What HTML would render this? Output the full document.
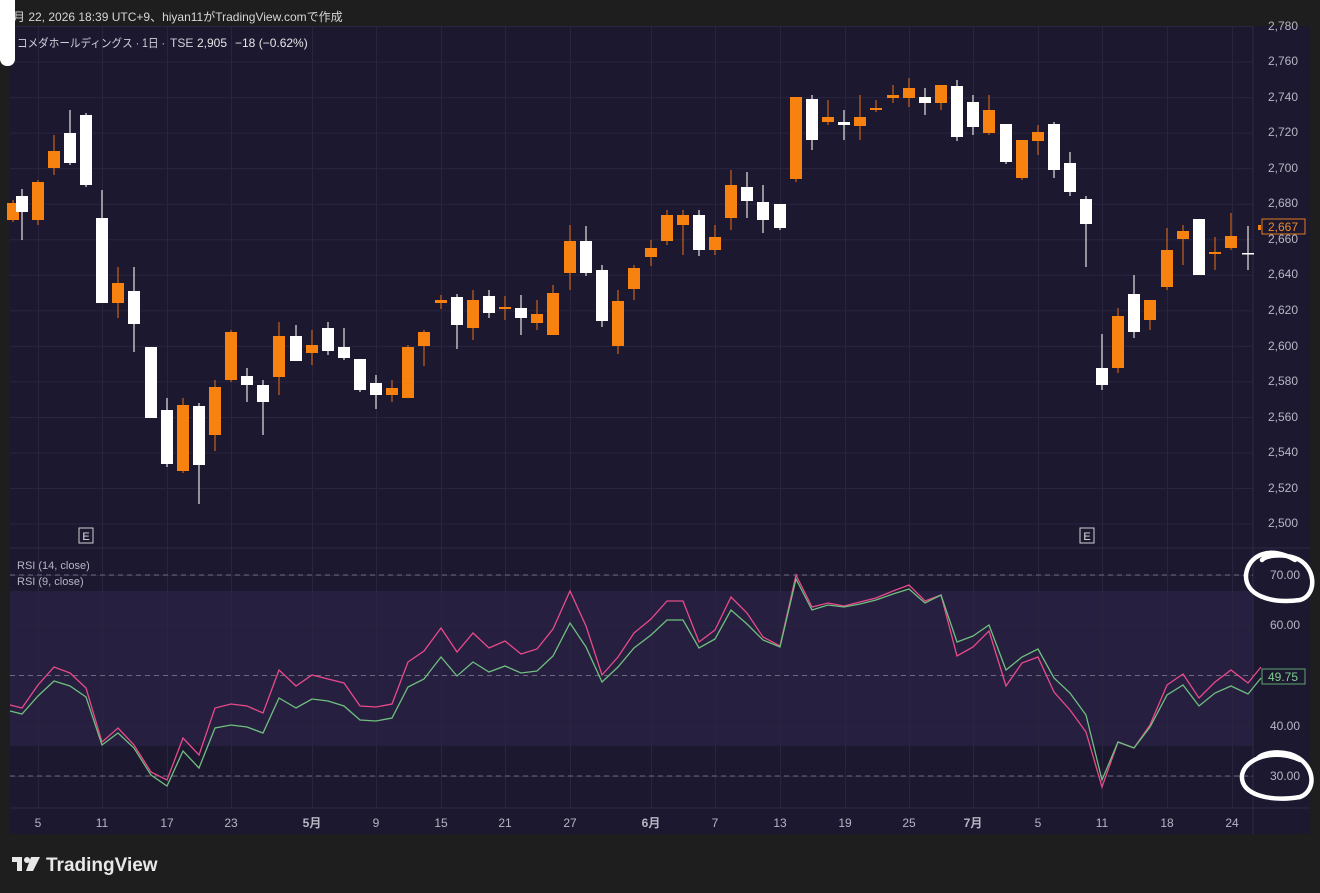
<!DOCTYPE html>
<html><head><meta charset="utf-8"><style>
html,body{margin:0;padding:0;background:#1e1e1e;width:1320px;height:893px;overflow:hidden}
svg{display:block}
text{font-family:"Liberation Sans","Noto Sans CJK JP",sans-serif}
</style></head><body>
<svg id="s" width="1320" height="893" xmlns="http://www.w3.org/2000/svg">
<rect width="1320" height="893" fill="#1e1e1e"/>
<rect x="10" y="26" width="1300" height="808" fill="#1c1830"/>
<rect x="10" y="591" width="1243" height="155" fill="#261f40"/>
<g id="grid" stroke="#29253f" stroke-width="1"></g>
<line x1="10" y1="548" x2="1310" y2="548" stroke="#2e2a44"/>
<line x1="10" y1="808" x2="1310" y2="808" stroke="#2e2a44"/>
<line x1="10" y1="575" x2="1253" y2="575" stroke="#6d6880" stroke-dasharray="5,4"/>
<line x1="10" y1="675.5" x2="1253" y2="675.5" stroke="#6d6880" stroke-dasharray="5,4"/>
<line x1="10" y1="776" x2="1253" y2="776" stroke="#6d6880" stroke-dasharray="5,4"/>
<g id="c"></g>
<polyline id="pk" fill="none" stroke="#e84a8a" stroke-width="1.3"/>
<polyline id="gr" fill="none" stroke="#6fbf7e" stroke-width="1.3"/>
<g fill="#b8b5c4" font-size="12" text-anchor="middle">
<text x="1283" y="30">2,780</text><text x="1283" y="65">2,760</text><text x="1283" y="101">2,740</text><text x="1283" y="136">2,720</text><text x="1283" y="172">2,700</text><text x="1283" y="207">2,680</text><text x="1283" y="243">2,660</text><text x="1283" y="278">2,640</text><text x="1283" y="314">2,620</text><text x="1283" y="350">2,600</text><text x="1283" y="385">2,580</text><text x="1283" y="421">2,560</text><text x="1283" y="456">2,540</text><text x="1283" y="492">2,520</text><text x="1283" y="527">2,500</text>
<text x="1285" y="579">70.00</text><text x="1285" y="629">60.00</text><text x="1285" y="730">40.00</text><text x="1285" y="780">30.00</text>
<text x="38" y="827">5</text><text x="102" y="827">11</text><text x="167" y="827">17</text><text x="231" y="827">23</text><text x="312" y="827" font-weight="bold">5月</text><text x="376" y="827">9</text><text x="441" y="827">15</text><text x="505" y="827">21</text><text x="570" y="827">27</text><text x="651" y="827" font-weight="bold">6月</text><text x="715" y="827">7</text><text x="780" y="827">13</text><text x="845" y="827">19</text><text x="909" y="827">25</text><text x="973" y="827" font-weight="bold">7月</text><text x="1038" y="827">5</text><text x="1102" y="827">11</text><text x="1167" y="827">18</text><text x="1232" y="827">24</text>
</g>
<rect x="1262" y="219" width="43" height="15" fill="#1c1830" stroke="#e07a1f"/>
<text x="1283" y="231" fill="#f08a2a" font-size="12" text-anchor="middle">2,667</text>
<rect x="1258" y="225" width="3" height="5" fill="#f7820f"/>
<rect x="1262" y="669" width="43" height="15" fill="#1c1830" stroke="#5fa56d"/>
<text x="1283" y="681" fill="#7fcf8e" font-size="12" text-anchor="middle">49.75</text>
<rect x="79" y="528" width="14" height="15" fill="#1c1830" stroke="#cfcfcf"/><text x="86" y="540" fill="#e0e0e0" font-size="11" text-anchor="middle">E</text>
<rect x="1080" y="528" width="14" height="15" fill="#1c1830" stroke="#cfcfcf"/><text x="1087" y="540" fill="#e0e0e0" font-size="11" text-anchor="middle">E</text>
<text x="13" y="21" fill="#d6d6d6" font-size="12">月 22, 2026 18:39 UTC+9、hiyan11がTradingView.comで作成</text>
<text x="17" y="47" fill="#d0cfd8" font-size="11.5" textLength="148" lengthAdjust="spacingAndGlyphs">コメダホールディングス · 1日 ·</text>
<text x="170" y="47" fill="#d0cfd8" font-size="12">TSE</text>
<text x="197" y="47" fill="#e6e6e6" font-size="12">2,905</text>
<text x="235" y="47" fill="#e6e6e6" font-size="12">−18 (−0.62%)</text>
<text x="17" y="569" fill="#b8b5c4" font-size="11">RSI (14, close)</text>
<text x="17" y="585" fill="#b8b5c4" font-size="11">RSI (9, close)</text>
<g fill="#e8e8e8">
<rect x="12" y="857" width="10" height="5"/><rect x="17" y="857" width="5" height="14"/>
<circle cx="27" cy="860" r="3"/><path d="M31 857h9l-7 14h-7z"/>
</g>
<text x="46" y="871" fill="#e8e8e8" font-size="19" font-weight="bold">TradingView</text>
<rect x="0" y="-10" width="15" height="76" rx="7" fill="#fff"/>
<g fill="none" stroke="#fff" stroke-width="4.5" stroke-linecap="round">
<path d="M1295 560 C1270 545 1248 555 1246 575 C1245 595 1270 604 1300 600 C1318 595 1316 565 1295 558 C1280 553 1265 556 1262 560"/>
<path d="M1300 760 C1275 748 1245 758 1242 775 C1240 795 1270 802 1300 797 C1318 790 1315 762 1290 754 C1275 750 1262 754 1258 758"/>
</g>
</svg>
<script>
var ns="http://www.w3.org/2000/svg",g=document.getElementById('grid'),c=document.getElementById('c');
function el(p,t,a){var e=document.createElementNS(ns,t);for(var k in a)e.setAttribute(k,a[k]);p.appendChild(e);return e}
for(var i=0;i<15;i++){var y=26+35.54*i+0.5;el(g,'line',{x1:10,x2:1253,y1:y,y2:y})}
for(var i=0;i<5;i++){var y=575+50.25*i+0.5;el(g,'line',{x1:10,x2:1253,y1:y,y2:y})}
[38,102,167,231,312,376,441,505,570,651,715,780,845,909,973,1038,1102,1167,1232].forEach(function(x){el(g,'line',{x1:x+.5,x2:x+.5,y1:26,y2:808})});
el(g,'line',{x1:1253,x2:1253,y1:26,y2:834,stroke:'#2e2a44'});
var C=[[13,'o',203,220,200,222],[22,'w',196,212,189,240],[38,'o',182,220,180,225],[54,'o',151,168,135,175],[70,'w',133,163,110,165],[86,'w',115,185,113,187],[102,'w',218,303,190,303],[118,'o',283,303,267,318],[134,'w',291,324,267,352],[151,'w',347,418,347,418],[167,'w',410,464,398,467],[183,'o',405,471,398,473],[199,'w',406,465,403,504],[215,'o',387,435,380,451],[231,'o',332,380,330,382],[247,'w',376,385,368,402],[263,'w',385,402,380,435],[279,'o',336,377,322,395],[296,'w',336,361,325,361],[312,'o',345,353,330,365],[328,'w',328,351,322,355],[344,'w',347,358,328,360],[360,'w',359,390,359,392],[376,'w',383,395,375,409],[392,'o',388,395,380,402],[408,'o',347,398,345,398],[424,'o',332,346,330,366],[441,'o',300,303,295,309],[457,'w',297,325,294,349],[473,'o',300,328,290,340],[489,'w',296,313,290,318],[505,'o',307,309,296,320],[521,'w',308,318,295,335],[537,'o',314,323,300,330],[553,'o',293,335,285,335],[570,'o',241,273,225,290],[586,'w',241,273,226,276],[602,'w',270,321,265,327],[618,'o',301,346,290,354],[634,'o',268,289,265,300],[651,'o',248,257,240,266],[667,'o',215,241,210,245],[683,'o',215,225,210,255],[699,'w',215,250,210,256],[715,'o',237,250,225,255],[731,'o',185,218,170,230],[747,'w',187,201,172,218],[763,'w',202,220,185,233],[780,'w',204,228,204,230],[796,'o',97,179,97,182],[812,'w',99,140,95,150],[828,'o',117,122,100,125],[844,'w',122,125,110,140],[860,'o',117,126,95,140],[876,'o',108,110,100,112],[893,'o',95,98,85,103],[909,'o',88,98,78,107],[925,'w',97,103,88,115],[941,'o',85,103,85,110],[957,'w',86,137,80,141],[973,'w',102,127,95,135],[989,'o',110,133,95,135],[1006,'w',124,162,124,164],[1022,'o',140,178,140,180],[1038,'o',132,141,125,155],[1054,'w',124,170,122,178],[1070,'w',163,192,152,196],[1086,'w',199,224,196,267],[1102,'w',368,385,334,390],[1118,'o',316,368,308,373],[1134,'w',294,332,275,338],[1150,'o',300,320,300,330],[1167,'o',250,287,228,290],[1183,'o',231,239,225,265],[1199,'w',219,275,219,275],[1215,'o',252,254,237,270],[1231,'o',236,248,213,250],[1248,'w',253,254,226,270]];
C.forEach(function(d){var o=d[1]=='o';
el(c,'line',{x1:d[0],x2:d[0],y1:d[4],y2:d[5],stroke:o?'#b0581e':'#c8c8c8','stroke-width':1.4});
el(c,'rect',{x:d[0]-6,y:d[2],width:12,height:Math.max(1.5,d[3]-d[2]),fill:o?'#f7820f':'#ffffff'});});
var P="10,705 22,708 38,685 54,667 70,673 86,688 102,742 118,728 134,745 151,772 167,780 183,738 199,755 215,708 231,704 247,706 263,713 279,670 296,686 312,675 328,679 344,683 360,706 376,707 392,704 408,662 424,651 441,628 457,652 473,633 489,648 505,641 521,654 537,649 553,629 570,591 586,626 602,675 618,657 634,633 651,619 667,601 683,601 699,642 715,630 731,597 747,613 763,637 780,646 796,575 812,607 828,603 844,606 860,602 876,598 893,591 909,585 925,601 941,595 957,656 973,647 989,631 1006,686 1022,663 1038,657 1054,692 1070,710 1086,732 1102,787 1118,742 1134,748 1150,725 1167,685 1183,674 1199,698 1215,682 1231,670 1248,683 1261,667";
var G="10,711 22,714 38,696 54,681 70,686 86,697 102,745 118,733 134,748 151,775 167,786 183,751 199,768 215,728 231,725 247,727 263,733 279,698 296,708 312,699 328,701 344,706 360,720 376,721 392,718 408,687 424,679 441,657 457,676 473,662 489,672 505,666 521,673 537,671 553,656 570,623 586,647 602,682 618,667 634,648 651,635 667,620 683,620 699,648 715,639 731,610 747,624 763,640 780,647 796,579 812,610 828,605 844,607 860,604 876,600 893,594 909,589 925,603 941,595 957,642 973,636 989,625 1006,670 1022,657 1038,649 1054,678 1070,693 1086,715 1102,780 1118,742 1134,748 1150,727 1167,695 1183,685 1199,706 1215,693 1231,686 1248,694 1261,678";
document.getElementById('pk').setAttribute('points',P);
document.getElementById('gr').setAttribute('points',G);
</script>
</body></html>
